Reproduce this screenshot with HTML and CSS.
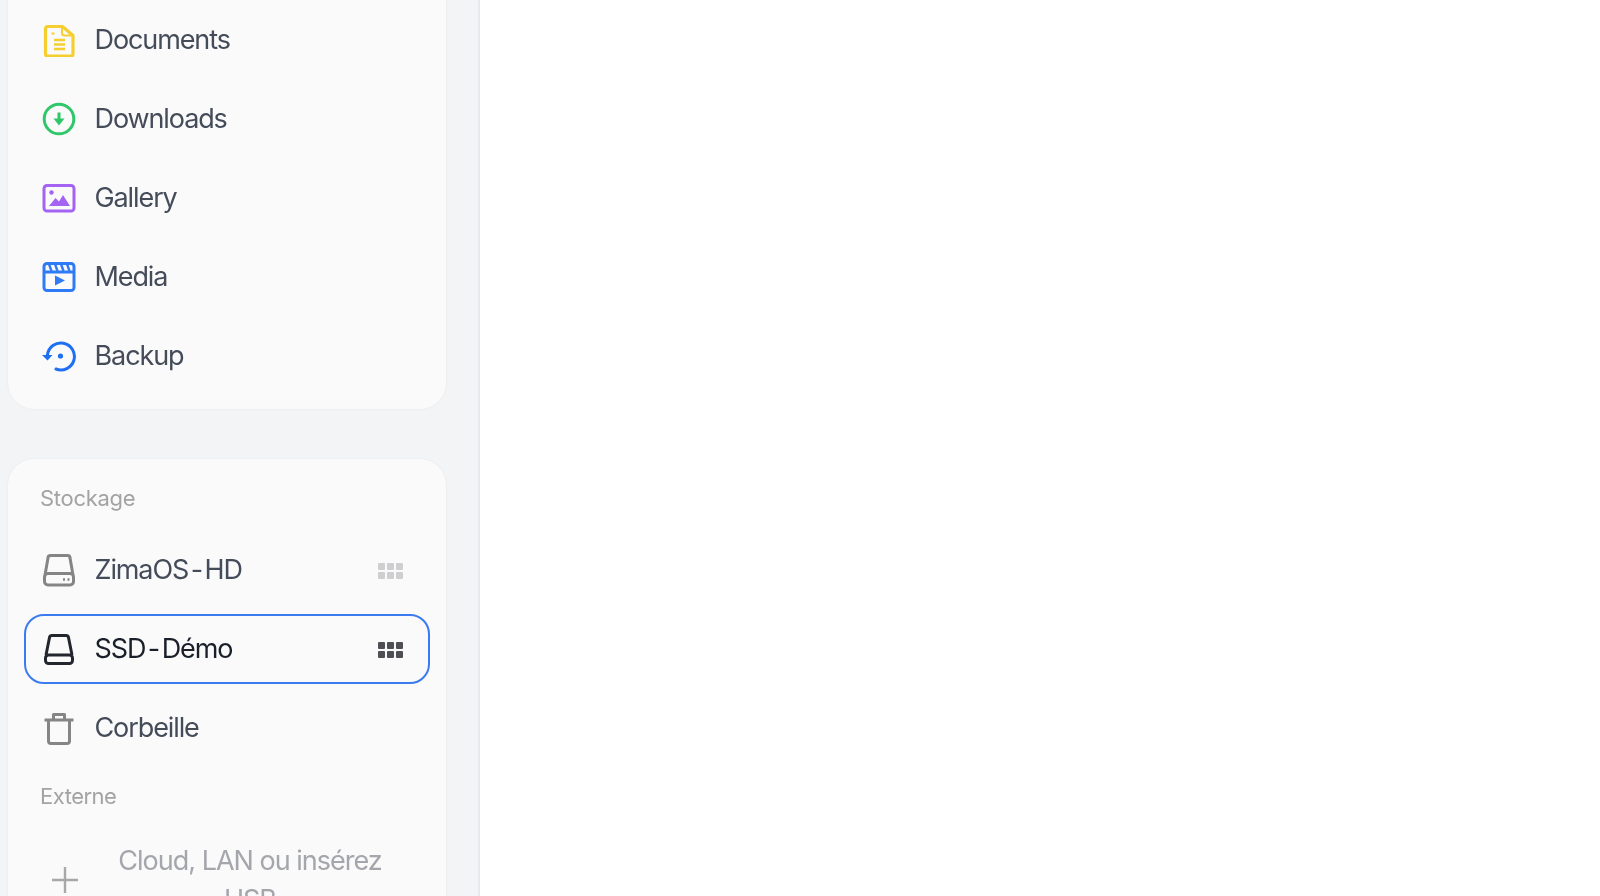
FILE: index.html
```html
<!DOCTYPE html>
<html lang="fr">
<head>
<meta charset="utf-8">
<title>Files</title>
<link rel="stylesheet" href="styles.css">
</head>
<body>
<div class="app">
<aside class="sidebar">
  <section class="card card-top">
    <ul class="list">
      <li class="row"><svg class="icon" viewBox="0 0 34 34" fill="none" stroke="#f5cf2f" stroke-width="3.200" stroke-linejoin="round"><path d="M3.500 5.500a2 2 0 0 1 2-2h15L31 12.500V31a2 2 0 0 1-2 2H5.500a2 2 0 0 1-2-2z"/><path d="M20 4v6a2.500 2.500 0 0 0 2.500 2.500h8" stroke-width="2"/><path d="M12 17h11M12 21.500h11M12 26h11" stroke-width="2.400"/><path d="M9.500 10.500h3" stroke-width="2"/></svg><span class="label">Documents</span></li>
      <li class="row"><svg class="icon" viewBox="0 0 34 34" fill="none" stroke="#2fc76a" stroke-width="3"><circle cx="17" cy="17" r="14.800"/><path d="M17 10.500v8" stroke-width="3"/><path d="M11.500 16.500h11L17 23.500z" fill="#2fc76a" stroke="none"/></svg><span class="label">Downloads</span></li>
      <li class="row"><svg class="icon" viewBox="0 0 34 34" fill="none" stroke="#a463f2" stroke-width="3"><rect x="2" y="4.500" width="30" height="25.500" rx="3"/><circle cx="9.500" cy="11.500" r="2.200" fill="#a463f2" stroke="none"/><path d="M7 25l6.500-8 3.500 3.500 4-6.500 7 11z" fill="#a463f2" stroke="none"/></svg><span class="label">Gallery</span></li>
      <li class="row"><svg class="icon" viewBox="0 0 34 34" fill="none" stroke="#2f7bf6" stroke-width="3"><rect x="2" y="3.500" width="30" height="27" rx="3"/><path d="M2 12h30" /><path d="M7 4l2.500 7M13 4l2.500 7M19 4l2.500 7M25 4l2.500 7" stroke-width="2.400"/><path d="M13 15.500l10 5-10 5z" fill="#2f7bf6" stroke="none"/></svg><span class="label">Media</span></li>
      <li class="row"><svg class="icon" viewBox="0 0 34 34" fill="none" stroke="#1f6ff2" stroke-width="3" stroke-linecap="round"><path d="M5.500 16A13.500 13.500 0 1 1 14 30"/><path d="M0 16h10.500L5.500 21.500z" fill="#1f6ff2" stroke="none"/><circle cx="18.500" cy="17" r="2.600" fill="#1f6ff2" stroke="none"/></svg><span class="label">Backup</span></li>
    </ul>
  </section>
  <section class="card card-bottom">
    <h2 class="heading">Stockage</h2>
    <ul class="list">
      <li class="row"><svg class="icon" viewBox="0 0 34 34" fill="none" stroke="#858585" stroke-width="3" stroke-linejoin="round"><path d="M3 22L6 5a2.500 2.500 0 0 1 2.500-2.500h17A2.500 2.500 0 0 1 28 5l3 17"/><rect x="2.500" y="20.500" width="29" height="11.500" rx="3.500"/><path d="M21 26.500h2M25.500 26.500h2" stroke-width="2.400"/></svg><span class="label">ZimaOS<span class="hy">-</span>HD</span><span class="dots"><i></i><i></i><i></i><i></i><i></i><i></i></span></li>
      <li class="row active"><svg class="icon" viewBox="0 0 34 34" fill="none" stroke="#23262c" stroke-width="3" stroke-linejoin="round"><path d="M4 23L7.500 5.500A2.500 2.500 0 0 1 10 3.500h14a2.500 2.500 0 0 1 2.500 2L30 23"/><rect x="3.500" y="23" width="27" height="8.500" rx="3"/></svg><span class="label">SSD<span class="hy">-</span>Démo</span><span class="dots"><i></i><i></i><i></i><i></i><i></i><i></i></span></li>
      <li class="row"><svg class="icon" viewBox="0 0 34 34" fill="none" stroke="#858585" stroke-width="3" stroke-linejoin="round"><path d="M2.500 9h29"/><path d="M11.500 9V3.500h11V9"/><path d="M6.500 9v21a2.500 2.500 0 0 0 2.500 2.500h16a2.500 2.500 0 0 0 2.500-2.500V9"/></svg><span class="label">Corbeille</span></li>
    </ul>
    <h2 class="heading heading-ext">Externe</h2>
    <div class="add"><svg class="plus" viewBox="0 0 26 26" stroke="#a8a8a8" stroke-width="2.400"><path d="M13 0v26M0 13h26"/></svg><span class="add-text">Cloud, LAN ou insérez USB</span></div>
  </section>
</aside>
<main class="content"></main>
</div>
</body>
</html>
```
FILE: styles.css
```css
* { box-sizing: border-box; }
html, body { margin: 0; height: 100%; overflow: hidden; background: #fff; }
body { font-family: Inter, "Liberation Sans", sans-serif; }
.app { display: flex; height: 896px; overflow: hidden; }
.sidebar { width: 480px; flex: none; height: 896px; background: #f3f4f6; border-right: 2px solid #e8e9ec; padding: 0 32px 0 8px; display: flex; flex-direction: column; gap: 50px; overflow: hidden; }
.content { flex: 1; background: #fff; }
.card { background: #fafafb; border-radius: 26px; box-shadow: 0 0 2px rgba(0,0,0,.08); padding: 0 16px; flex: none; filter: blur(0.45px); }
.card-top { margin-top: -40px; padding-top: 45px; padding-bottom: 18px; }
.card-bottom { padding-top: 25px; padding-bottom: 40px; }
.list { list-style: none; margin: 0; padding: 0; display: flex; flex-direction: column; gap: 9px; }
.row { height: 70px; display: flex; align-items: center; gap: 18.500px; padding: 0 25px 0 16px; border: 2px solid transparent; border-radius: 20px; }
.icon { width: 34px; height: 34px; flex: none; }
.label { flex: 1; font-size: 27px; padding-bottom: 1px; letter-spacing: -1.1px; color: #454c59; }
.hy { margin: 0 2.500px; }
.active { border-color: #3b7bf0; }
.active .label { color: #1a2029; }
.heading { margin: 0 0 23px 16px; font-size: 22px; line-height: 28px; font-weight: 400; letter-spacing: -0.3px; color: #a3a3a3; }
.heading-ext { margin-top: 19px; margin-bottom: 0; letter-spacing: -0.5px; }
.dots { display: grid; grid-template-columns: repeat(3, 7px); gap: 2px; transform: translateY(1px); }
.dots i { width: 7px; height: 7px; border-radius: 1px; background: #cfcfd2; }
.active .dots i { background: #4f5056; }
.add { display: flex; align-items: center; margin: 31px 0 0 28px; gap: 16px; }
.plus { width: 26px; height: 26px; flex: none; }
.add-text { width: 312px; text-align: center; font-size: 27px; line-height: 39px; letter-spacing: -1px; color: #a4a6ab; }
```
